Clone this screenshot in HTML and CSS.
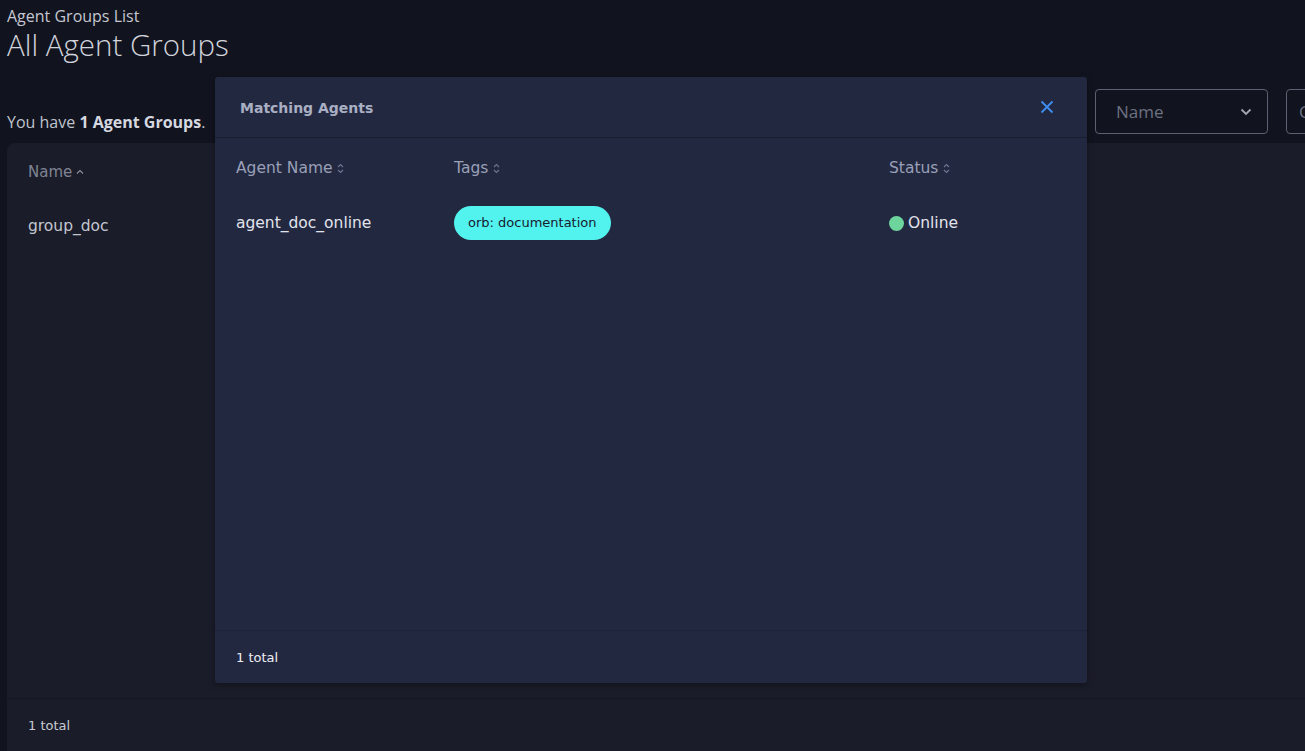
FILE: index.html
```html
<!DOCTYPE html>
<html>
	<head>
		<link rel="stylesheet" href="styles.css">
	</head>
	<body>
		<div class="page">
			<div class="crumb">Agent Groups List</div>
			<h1 class="title">All Agent Groups</h1>

			<div class="toolbar">
				<p class="count">You have <b>1 Agent Groups</b>.</p>
				<div class="filters">
					<div class="select">
						<span>Name</span>
						<svg width="12" height="8" viewBox="0 0 12 8"><path d="M1.5 1.5 L6 6 L10.5 1.5" fill="none" stroke="#a3a7b5" stroke-width="1.8"/></svg>
					</div>
					<div class="search">C</div>
				</div>
			</div>

			<div class="card">
				<div class="card-head">
					<span>Name</span>
					<svg width="8" height="6" viewBox="0 0 8 6"><path d="M1 4.5 L4 1.5 L7 4.5" fill="none" stroke="#8a8e9c" stroke-width="1.2"/></svg>
				</div>
				<div class="card-row">group_doc</div>
				<div class="card-foot">1 total</div>
			</div>
		</div>

		<div class="modal">
			<div class="modal-head">
				<h2>Matching Agents</h2>
				<svg class="close" width="14" height="14" viewBox="0 0 14 14"><path d="M1.5 1.5 L12.5 12.5 M12.5 1.5 L1.5 12.5" stroke="#3d8ef0" stroke-width="1.8"/></svg>
			</div>
			<div class="modal-body">
				<div class="grid head">
					<div>Agent Name <svg class="sort" width="7" height="11" viewBox="0 0 7 11"><path d="M1 4 L3.5 1.5 L6 4 M1 7 L3.5 9.5 L6 7" fill="none" stroke="#70768f" stroke-width="1.1"/></svg></div>
					<div>Tags <svg class="sort" width="7" height="11" viewBox="0 0 7 11"><path d="M1 4 L3.5 1.5 L6 4 M1 7 L3.5 9.5 L6 7" fill="none" stroke="#70768f" stroke-width="1.1"/></svg></div>
					<div>Status <svg class="sort" width="7" height="11" viewBox="0 0 7 11"><path d="M1 4 L3.5 1.5 L6 4 M1 7 L3.5 9.5 L6 7" fill="none" stroke="#70768f" stroke-width="1.1"/></svg></div>
				</div>
				<div class="grid row">
					<div>agent_doc_online</div>
					<div><span class="tag">orb: documentation</span></div>
					<div class="status"><span class="dot"></span>Online</div>
				</div>
			</div>
			<div class="modal-foot">1 total</div>
		</div>
	</body>
</html>
```

FILE: styles.css
```css
html, body {
	height: 100%;
}

body {
	margin: 0;
	background: #11131e;
	font-family: "Open Sans", sans-serif;
	color: #c9ccd6;
	overflow: hidden;
}

.page {
	display: flex;
	flex-direction: column;
	height: 100%;
	padding-left: 7px;
	box-sizing: border-box;
}

.crumb {
	font-size: 16px;
	line-height: 22px;
	margin-top: 5px;
	color: #c4c7d1;
}

.title {
	margin: 0;
	font-weight: 300;
	font-size: 29.5px;
	line-height: 36px;
	color: #d2d4dc;
}

.toolbar {
	display: flex;
	justify-content: space-between;
	align-items: flex-end;
	margin-top: 25px;
	height: 46px;
}

.count {
	margin: 0 0 1px;
	font-size: 16px;
	line-height: 22px;
	color: #bfc3cd;
}

.count b {
	color: #d6d8e0;
}

.filters {
	display: flex;
	gap: 18px;
	margin-right: -81px;
}

.select {
	width: 173px;
	height: 45px;
	box-sizing: border-box;
	border: 1px solid #5c6070;
	border-radius: 4px;
	display: flex;
	align-items: center;
	justify-content: space-between;
	padding: 0 15px 0 20px;
	font-size: 17px;
	color: #6c7182;
}

.search {
	width: 100px;
	height: 45px;
	box-sizing: border-box;
	border: 1px solid #5c6070;
	border-radius: 4px;
	padding-left: 12px;
	line-height: 43px;
	font-size: 17px;
	color: #6c7182;
}

.card {
	flex: 1;
	margin-top: 9px;
	background: #1a1c29;
	border-radius: 8px 0 0 0;
	display: flex;
	flex-direction: column;
	padding-left: 21px;
	font-family: "DejaVu Sans", sans-serif;
}

.card-head {
	display: flex;
	align-items: center;
	gap: 4px;
	height: 58px;
	font-size: 15px;
	color: #808494;
}

.card-row {
	height: 52px;
	line-height: 50px;
	font-size: 15.5px;
	color: #c3c6d0;
}

.card-foot {
	margin-top: auto;
	margin-left: -21px;
	padding-left: 21px;
	border-top: 1px solid #141621;
	height: 52px;
	line-height: 54px;
	font-size: 13px;
	color: #c7cad3;
}

.modal {
	position: absolute;
	left: 215px;
	top: 77px;
	width: 872px;
	height: 606px;
	background: #232841;
	border-radius: 3px;
	box-shadow: 0 2px 6px rgba(0, 0, 0, 0.35);
	display: flex;
	flex-direction: column;
	font-family: "DejaVu Sans", sans-serif;
}

.modal-head {
	display: flex;
	align-items: center;
	justify-content: space-between;
	height: 61px;
	padding: 1px 33px 0 25px;
	box-sizing: border-box;
	border-bottom: 1px solid #1a1e31;
}

.modal-head h2 {
	margin: 0;
	font-size: 14px;
	font-weight: 600;
	color: #a9afc3;
}

.close {
	margin-top: -2px;
}

.modal-body {
	flex: 1;
	padding: 1px 21px 0;
}

.grid {
	display: grid;
	grid-template-columns: 218px 435px 1fr;
	align-items: center;
}

.grid.head {
	height: 58px;
	font-size: 15.5px;
	color: #99a0b7;
}

.sort {
	vertical-align: -1px;
}

.grid.row {
	height: 52px;
	font-size: 15.5px;
	color: #e2e4ec;
}

.tag {
	display: inline-block;
	background: #52f2ee;
	color: #17202e;
	font-size: 13px;
	line-height: 34px;
	padding: 0 14px;
	border-radius: 17px;
}

.status {
	display: flex;
	align-items: center;
	gap: 4px;
}

.dot {
	width: 15px;
	height: 15px;
	border-radius: 50%;
	background: #6dd49c;
}

.modal-foot {
	height: 52px;
	line-height: 54px;
	padding-left: 21px;
	border-top: 1px solid #1e2236;
	font-size: 13px;
	color: #eceef3;
}
```
